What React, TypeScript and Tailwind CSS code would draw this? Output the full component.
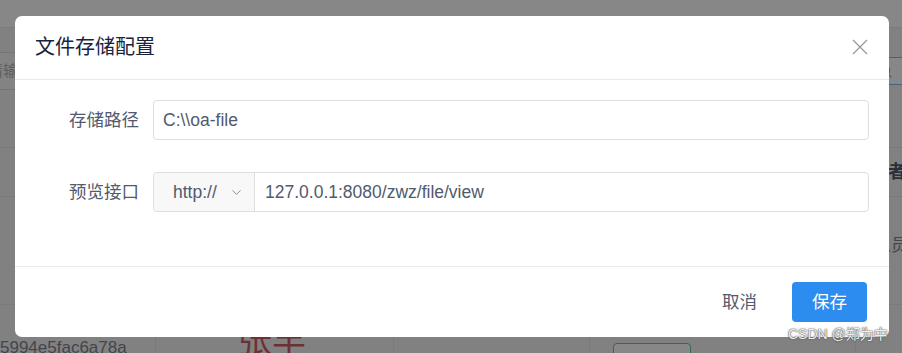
import { ChevronDown, Search } from 'lucide-react';

// Page that sits behind the modal mask; mostly hidden, only edges show.
function BackgroundPage() {
  return (
    <div className="flex h-full flex-col bg-[#f0f0f0] text-[#515a6e]">
      <div className="h-[28px] shrink-0 border-b border-[#e3e3e3] bg-white" />
      <div className="flex h-[119px] shrink-0 items-start justify-between pt-[24px]">
        <div className="flex h-[38px] w-[240px] -ml-[30px] items-center border-y border-[#d0d0d0] bg-[#f4f4f4] pl-[18px] text-[15px] text-[#999]">
          请输入文件名
        </div>
        <div className="mt-[5px] flex h-[28px] w-[200px] -mr-[10px] items-center justify-end border border-[#57a3f3] bg-white pr-[18px]">
          <Search size={16} className="text-[#57a3f3]" strokeWidth={2} />
        </div>
      </div>
      <div className="flex h-[50px] shrink-0 items-center border-y border-[#dcdee2] text-[18px] font-bold text-[#17233d]">
        <div className="w-[156px] shrink-0 -ml-[56px] whitespace-nowrap">文件名</div>
        <div className="flex-1" />
        <div className="w-[54px] shrink-0 -mr-[4px] whitespace-nowrap">上传者</div>
      </div>
      <div className="flex h-[108px] shrink-0 border-b border-[#dcdee2] text-[17px]">
        <div className="flex w-[156px] shrink-0 flex-col justify-center -ml-[100px] leading-[27px] whitespace-nowrap">
          <span>d2a3ba9c1f0</span>
          <span>7a9cd81be2</span>
        </div>
        <div className="flex-1" />
        <div className="flex w-[40px] shrink-0 items-center -mr-[12px] -mt-[10px] whitespace-nowrap">人员</div>
      </div>
      <div className="flex flex-1 text-[17px]">
        <div className="w-[156px] shrink-0 border-r border-[#dcdee2] pt-[30px] whitespace-nowrap">5994e5fac6a78a</div>
        <div className="w-[238px] shrink-0 border-r border-[#dcdee2] pl-[82px] pt-[18px] text-[34px] leading-none text-[#c0262d]">张丰</div>
        <div className="w-[196px] shrink-0 border-r border-[#dcdee2]" />
        <div className="w-[266px] shrink-0 border-r border-[#dcdee2] pl-[23px] pt-[38px]">
          <div className="h-[30px] w-[78px] rounded-[4px] border border-[#19be6b] bg-white" />
        </div>
        <div className="flex-1" />
      </div>
    </div>
  );
}

export default function App() {
  return (
    <div className="relative h-[353px] w-[902px] overflow-hidden font-['Liberation_Sans','Noto_Sans_CJK_SC',sans-serif]">
      <BackgroundPage />
      <div className="absolute inset-0 bg-[rgba(55,55,55,0.6)]" />

      <div className="absolute left-[15px] top-[16px] w-[874px] rounded-[7px] bg-white">
        <div className="flex h-[64px] items-center justify-between border-b border-[#e8eaec] pl-5 pr-[21px] pb-[2px]">
          <h2 className="text-[20px] text-[#17233d]">文件存储配置</h2>
          <svg width="16" height="16" viewBox="0 0 16 16" className="text-[#999]">
            <path d="M1 1L15 15M15 1L1 15" stroke="currentColor" strokeWidth="1.3" fill="none" />
          </svg>
        </div>

        <div className="flex flex-col gap-8 pl-5 pr-5 pt-5 pb-[54px] text-[17.5px] text-[#515a6e]">
          <div className="flex items-center">
            <label className="w-[118px] shrink-0 pr-[14px] text-right">存储路径</label>
            <div className="flex h-[40px] flex-1 items-center rounded-[4px] border border-[#dcdee2] pl-[9px]">
              C:\\oa-file
            </div>
          </div>
          <div className="flex items-center">
            <label className="w-[118px] shrink-0 pr-[14px] text-right">预览接口</label>
            <div className="flex h-[40px] flex-1 rounded-[4px] border border-[#dcdee2]">
              <div className="flex w-[101px] shrink-0 items-center justify-between rounded-l-[4px] border-r border-[#dcdee2] bg-[#f8f8f9] pl-[19px] pr-[10px]">
                <span>http://</span>
                <ChevronDown size={15} strokeWidth={1.5} className="text-[#808695]" />
              </div>
              <div className="flex flex-1 items-center pl-[10px]">127.0.0.1:8080/zwz/file/view</div>
            </div>
          </div>
        </div>

        <div className="flex items-center justify-end gap-[19px] border-t border-[#e8eaec] pb-[15px] pr-[22px] pt-[15px] text-[17.5px]">
          <button className="h-[40px] px-4 text-[#515a6e]">取消</button>
          <button className="h-[40px] w-[75px] rounded-[4px] bg-[#2d8cf0] text-white">保存</button>
        </div>
      </div>

      <div className="absolute left-[788px] top-[324px] text-[14px] text-[#f0f0f0] [text-shadow:0_0_2px_#555,0_0_1px_#333]">
        CSDN @郑为中
      </div>
    </div>
  );
}
